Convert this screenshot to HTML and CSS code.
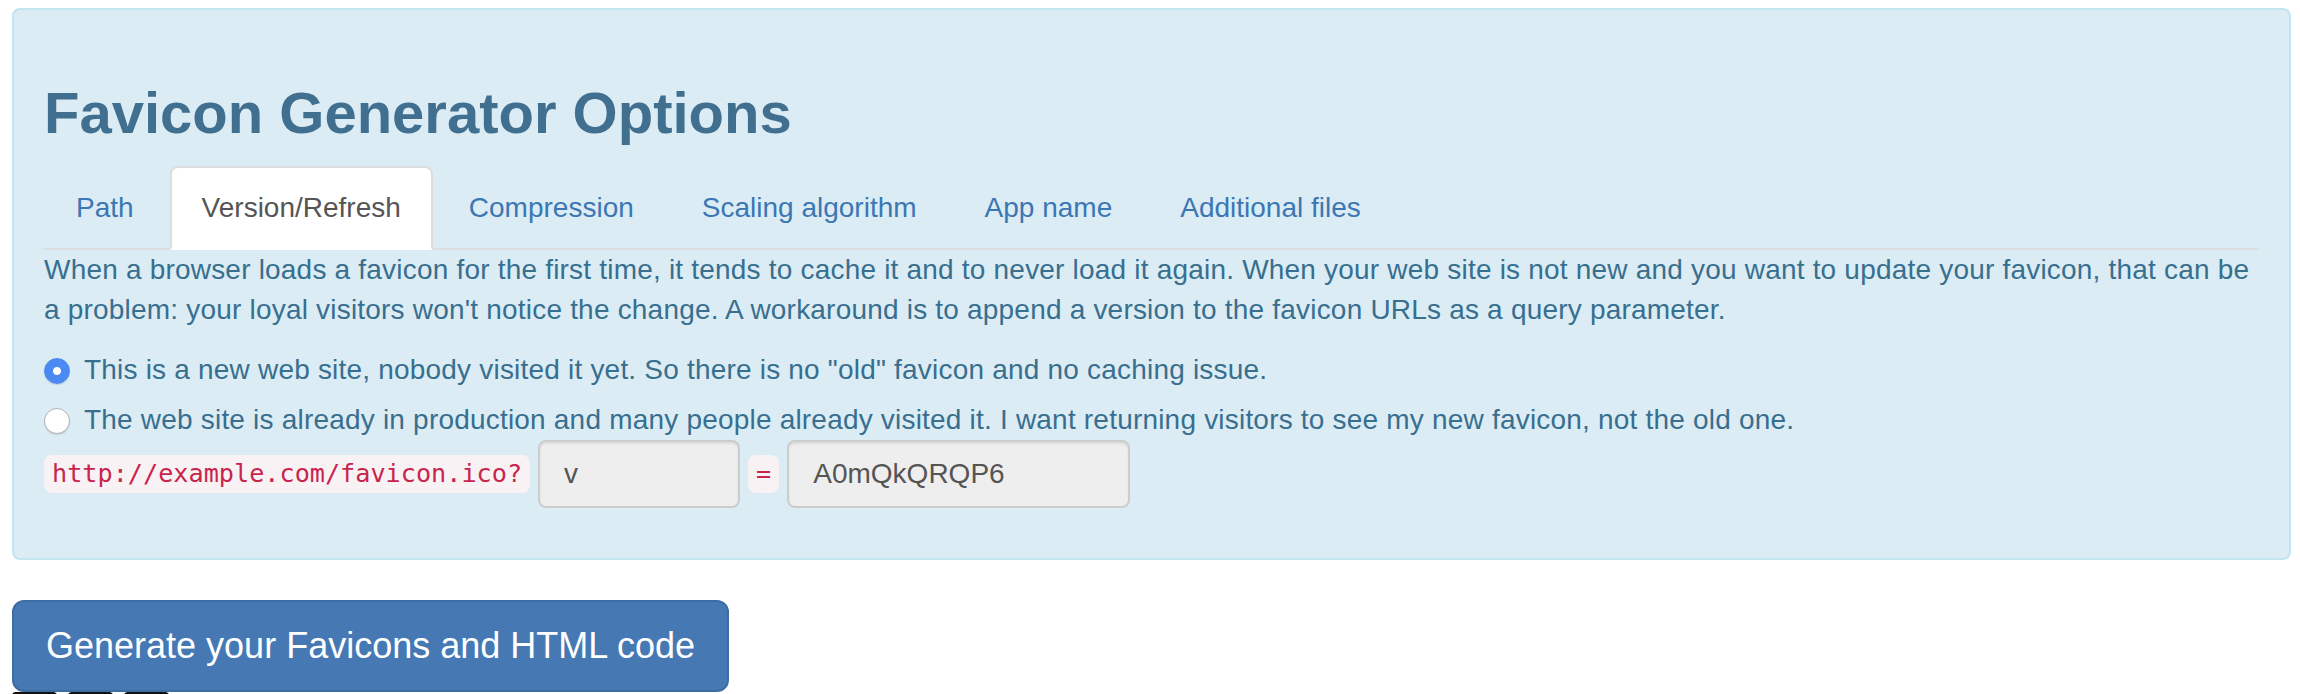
FILE: index.html
```html
<!DOCTYPE html>
<html lang="en">
<head>
  <meta charset="UTF-8">
  <title>Favicon Generator Options</title>
  <link rel="stylesheet" href="styles.css">
</head>
<body>
  <div class="page">
    <div class="alert">
      <h2 class="title">Favicon Generator Options</h2>
      <ul class="tabs">
        <li><a href="#">Path</a></li>
        <li class="active"><a href="#">Version/Refresh</a></li>
        <li><a href="#">Compression</a></li>
        <li><a href="#">Scaling algorithm</a></li>
        <li><a href="#">App name</a></li>
        <li><a href="#">Additional files</a></li>
      </ul>
      <div class="tab-pane">
        <p>When a browser loads a favicon for the first time, it tends to cache it and to never load it again. When your web site is not new and you want to update your favicon, that can be a problem: your loyal visitors won't notice the change. A workaround is to append a version to the favicon URLs as a query parameter.</p>
        <div class="radio">
          <label><input type="radio" name="version" checked><span>This is a new web site, nobody visited it yet. So there is no "old" favicon and no caching issue.</span></label>
        </div>
        <div class="radio">
          <label><input type="radio" name="version"><span>The web site is already in production and many people already visited it. I want returning visitors to see my new favicon, not the old one.</span></label>
        </div>
        <div class="version-row">
          <code>http://example.com/favicon.ico?</code>
          <input type="text" class="field field-key" value="v" readonly>
          <code>=</code>
          <input type="text" class="field field-value" value="A0mQkQRQP6" readonly>
        </div>
      </div>
    </div>

    <div class="actions">
      <button class="btn-generate">Generate your Favicons and HTML code</button>
      <div class="thumbs"><span></span><span></span><span></span></div>
    </div>
  </div>
</body>
</html>
```

FILE: styles.css
```css
body {
  margin: 0;
  font-family: "Liberation Sans", Arial, sans-serif;
  font-size: 28px;
  line-height: 40px;
  color: #333;
  background: #fff;
}
.page {
  padding: 8px 9px 0 12px;
}
.alert {
  background: #dbecf5;
  border: 2px solid #c2e5f0;
  border-radius: 8px;
  padding: 30px;
  margin-bottom: 40px;
  color: #386f8f;
}
.title {
  margin: 40px 0 20px;
  font-size: 58px;
  line-height: 66px;
  font-weight: 700;
  color: #416f8f;
}
.tabs {
  list-style: none;
  margin: 0;
  padding: 0;
  display: flex;
  border-bottom: 2px solid #ddd;
}
.tabs li {
  margin-right: 4px;
  margin-bottom: -2px;
}
.tabs a {
  display: block;
  padding: 20px 30px;
  line-height: 40px;
  border: 2px solid transparent;
  border-radius: 8px 8px 0 0;
  color: #3b77b3;
  text-decoration: none;
}
.tabs .active a {
  color: #555;
  background: #fff;
  border-color: #ddd #ddd transparent;
}
.tab-pane p {
  margin: 0 0 20px;
  letter-spacing: 0.2px;
}
.radio {
  margin: 20px 0 0;
  letter-spacing: 0.2px;
}
.radio + .radio {
  margin-top: 10px;
}
.radio label {
  display: flex;
  align-items: flex-start;
}
.radio input {
  appearance: none;
  -webkit-appearance: none;
  flex: none;
  width: 26px;
  height: 26px;
  margin: 8px 14px 0 0;
  border-radius: 50%;
  border: 1px solid #b4b4b4;
  background: #fff;
  box-shadow: 0 1px 1px rgba(0, 0, 0, .12);
}
.radio input:checked {
  border-color: #4a87ee;
  background: radial-gradient(circle, #fff 0 3.5px, #4b8af3 4.5px);
}
.version-row {
  display: flex;
  align-items: center;
  gap: 8px;
  margin-bottom: 20px;
}
code {
  font-family: "DejaVu Sans Mono", "Liberation Mono", monospace;
  font-size: 25.2px;
  line-height: 29.6px;
  padding: 4px 8px;
  color: #c7254e;
  background: #f9f2f4;
  border-radius: 8px;
}
.field {
  box-sizing: border-box;
  height: 68px;
  padding: 12px 24px;
  font-family: inherit;
  font-size: 28px;
  color: #555;
  background: #eee;
  border: 2px solid #ccc;
  border-radius: 8px;
  box-shadow: inset 0 2px 2px rgba(0, 0, 0, .075);
  outline: none;
}
.field-key {
  width: 202px;
}
.field-value {
  width: 343px;
}
.actions {
  display: flex;
  flex-direction: column;
  align-items: flex-start;
}
.btn-generate {
  font-family: inherit;
  font-size: 36px;
  line-height: 48px;
  padding: 20px 32px;
  color: #fff;
  background: #4679b3;
  border: 2px solid #3c6ca3;
  border-radius: 12px;
  cursor: pointer;
}
.btn-generate:hover {
  background: #3a6a9f;
}
.thumbs {
  display: flex;
  gap: 11px;
}
.thumbs span {
  width: 45px;
  height: 45px;
  background: #111;
  border-radius: 4px 4px 0 0;
}
```
